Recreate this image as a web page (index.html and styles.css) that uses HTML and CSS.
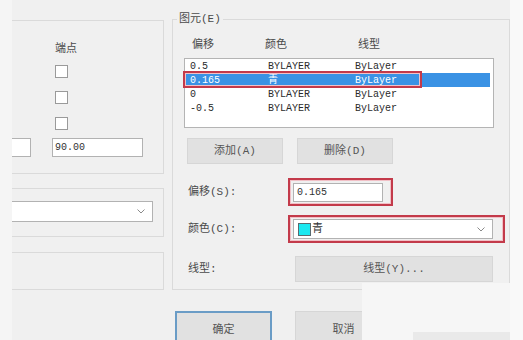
FILE: index.html
```html
<!DOCTYPE html>
<html lang="zh-CN">
<head>
    <meta charset="UTF-8">
    <title>多线样式</title>
    <link rel="stylesheet" href="styles.css">
</head>
<body>
    <div class="strip-left"></div>

    <!-- Left side: caps / fill / display -->
    <div class="left-col">
        <div class="frame frame-ends">
            <div class="ends">
                <div class="ends-title">端点</div>
                <span class="check"></span>
                <span class="check"></span>
                <span class="check"></span>
            </div>
            <div class="angle-row">
                <div class="field field-cut"></div>
                <div class="field field-angle">90.00</div>
            </div>
        </div>
        <div class="frame frame-fill">
            <div class="combo combo-cut">
                <svg class="chevron" width="8" height="5" viewBox="0 0 8 5"><polyline points="0.5,0.5 4,4 7.5,0.5" fill="none" stroke="#8a8a8a" stroke-width="1"/></svg>
            </div>
        </div>
        <div class="frame frame-empty"></div>
    </div>

    <!-- Right side: elements -->
    <div class="right-col">
        <fieldset class="group">
            <legend>图元(E)</legend>
            <div class="list-head">
                <span>偏移</span><span>颜色</span><span>线型</span>
            </div>
            <div class="list">
                <div class="row"><span>0.5</span><span>BYLAYER</span><span>ByLayer</span></div>
                <div class="row selected"><span>0.165</span><span>青</span><span>ByLayer</span></div>
                <div class="row"><span>0</span><span>BYLAYER</span><span>ByLayer</span></div>
                <div class="row"><span>-0.5</span><span>BYLAYER</span><span>ByLayer</span></div>
                <div class="mark mark-row"></div>
            </div>
            <div class="btn-row">
                <button class="btn">添加(A)</button>
                <button class="btn">删除(D)</button>
            </div>
            <div class="prop prop-offset">
                <label class="prop-label">偏移(S):</label>
                <div class="mark-box mark-offset">
                    <div class="field field-offset">0.165</div>
                </div>
            </div>
            <div class="prop prop-color">
                <label class="prop-label">颜色(C):</label>
                <div class="mark-box mark-color">
                    <div class="combo combo-color">
                        <span class="swatch"></span>青
                        <svg class="chevron" width="8" height="5" viewBox="0 0 8 5"><polyline points="0.5,0.5 4,4 7.5,0.5" fill="none" stroke="#8a8a8a" stroke-width="1"/></svg>
                    </div>
                </div>
            </div>
            <div class="prop prop-type">
                <label class="prop-label">线型:</label>
                <button class="btn btn-wide">线型(Y)...</button>
            </div>
        </fieldset>
        <div class="dialog-btns">
            <button class="btn btn-ok">确定</button>
            <button class="btn">取消</button>
        </div>
    </div>

    <div class="strip-right"></div>

    <!-- washed-out patch over the bottom right -->
    <div class="patch">
        <div class="patch-low"></div>
    </div>
</body>
</html>
```

FILE: styles.css
```css
body {
    margin: 0;
    width: 523px;
    height: 340px;
    overflow: hidden;
    display: flex;
    position: relative;
    background: #f0f0f0;
    color: #4a4a4a;
    font-family: 'Liberation Mono', 'Noto Sans CJK SC', monospace;
    font-size: 11px;
    line-height: 14px;
}

.strip-left {
    width: 12px;
    flex: none;
    background: #f5f5f5;
}

.strip-right {
    width: 13px;
    flex: none;
    background: #f9f9f9;
}

/* Left column */
.left-col {
    width: 152px;
    flex: none;
    display: flex;
    flex-direction: column;
}

.frame {
    box-sizing: border-box;
    border: 1px solid #dadada;
    border-left: none;
}

.frame-ends {
    margin-top: 20px;
    height: 154px;
    display: flex;
    flex-direction: column;
}

.ends {
    display: flex;
    flex-direction: column;
    align-items: flex-start;
    gap: 13px;
    margin-left: 43px;
    padding-top: 21px;
}

.ends-title {
    margin-bottom: -4px;
}

.check {
    width: 11px;
    height: 11px;
    border: 1px solid #9a9a9a;
    background: #fff;
}

.angle-row {
    display: flex;
    gap: 21px;
    margin-top: 8px;
}

.field {
    box-sizing: border-box;
    height: 19px;
    border: 1px solid #b2b2b2;
    background: #fff;
    color: #333;
    font-size: 10px;
    line-height: 17px;
    padding-left: 2px;
}

.field-cut {
    width: 19px;
    border-left: none;
}

.field-angle {
    width: 91px;
}

.frame-fill {
    margin-top: 14px;
    height: 49px;
    padding-top: 12px;
}

.combo {
    box-sizing: border-box;
    height: 21px;
    border: 1px solid #b2b2b2;
    background: #fff;
    display: flex;
    align-items: center;
    position: relative;
}

.combo-cut {
    width: 141px;
    border-left: none;
}

.chevron {
    position: absolute;
    right: 7px;
    top: 7px;
}

.frame-empty {
    margin-top: 15px;
    height: 38px;
}

/* Right column */
.right-col {
    width: 338px;
    flex: none;
    margin-left: 8px;
    padding-top: 12px;
    display: flex;
    flex-direction: column;
}

.group {
    margin: 0;
    padding: 0 0 7px;
    border: 1px solid #dadada;
    min-width: 0;
}

.group legend {
    margin-left: 4px;
    padding: 0 2px;
    line-height: 14px;
}

.list-head {
    display: grid;
    grid-template-columns: 73px 93px auto;
    margin-top: 12px;
    padding-left: 19px;
}

.list {
    position: relative;
    box-sizing: border-box;
    width: 310px;
    height: 70px;
    margin: 6px 0 0 11px;
    border: 1px solid #b4b4b4;
    background: #fff;
}

.row {
    display: grid;
    grid-template-columns: 78px 87px auto;
    height: 14px;
    padding-left: 5px;
    margin-right: 3px;
    color: #2a2a2a;
    font-size: 10px;
    line-height: 15px;
}

.row.selected {
    background: #3a92e4;
    color: #fff;
}

.mark {
    position: absolute;
    box-sizing: border-box;
    border: 2px solid #c33a4a;
    box-shadow: inset 0 0 0 1px #f1c0c6;
}

.mark-row {
    left: -2px;
    top: 12px;
    width: 239px;
    height: 17px;
}

.btn {
    box-sizing: border-box;
    margin: 0;
    border: 1px solid #d6d6d6;
    background: #e1e1e1;
    color: #555;
    font: inherit;
    padding: 0;
}

.btn-row {
    display: flex;
    gap: 14px;
    margin: 10px 0 0 14px;
}

.btn-row .btn {
    width: 96px;
    height: 26px;
}

.prop {
    display: flex;
    align-items: center;
    margin-left: 15px;
}

.prop-offset {
    margin-top: 14px;
}

.prop-color {
    margin-top: 9px;
}

.prop-type {
    margin-top: 13px;
}

.prop-label {
    width: 100px;
    flex: none;
}

.mark-box {
    box-sizing: border-box;
    height: 28px;
    border: 2px solid #c33a4a;
    box-shadow: inset 0 0 0 1px #f1c0c6;
    display: flex;
    align-items: center;
    padding-left: 3px;
}

.mark-offset {
    width: 105px;
}

.field-offset {
    width: 90px;
    padding-left: 3px;
}

.mark-color {
    width: 217px;
}

.combo-color {
    width: 200px;
    height: 20px;
    padding-left: 4px;
    gap: 1px;
    color: #333;
}

.swatch {
    width: 11px;
    height: 11px;
    background: #1ce8f0;
    border: 1px solid #5a6a70;
}

.btn-wide {
    width: 198px;
    height: 26px;
    margin-left: 7px;
}

.dialog-btns {
    display: flex;
    gap: 23px;
    margin: 21px 0 0 3px;
}

.dialog-btns .btn {
    width: 97px;
    height: 38px;
}

.dialog-btns .btn-ok {
    border: 2px solid #6a9cc6;
}

/* Patch */
.patch {
    position: absolute;
    left: 362px;
    top: 283px;
    width: 148px;
    height: 57px;
    background: #f6f6f6;
}

.patch-low {
    position: absolute;
    left: 51px;
    top: 49px;
    right: 0;
    bottom: 0;
    background: #e9e9e9;
}
```
